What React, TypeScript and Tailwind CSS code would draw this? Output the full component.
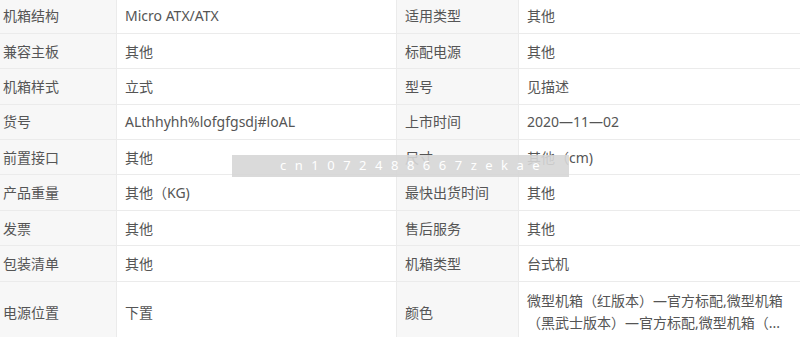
import React from "react";

const rows: [string, string, string, string][] = [
  ["机箱结构", "Micro ATX/ATX", "适用类型", "其他"],
  ["兼容主板", "其他", "标配电源", "其他"],
  ["机箱样式", "立式", "型号", "见描述"],
  ["货号", "ALthhyhh%lofgfgsdj#loAL", "上市时间", "2020—11—02"],
  ["前置接口", "其他", "尺寸", "其他（cm)"],
  ["产品重量", "其他（KG)", "最快出货时间", "其他"],
  ["发票", "其他", "售后服务", "其他"],
  ["包装清单", "其他", "机箱类型", "台式机"],
];

export default function App() {
  return (
    <div
      className="relative w-[800px] h-[337px] overflow-hidden bg-white text-[14px] text-[#555]"
      style={{ fontFamily: "'Noto Sans','Noto Sans CJK SC',sans-serif" }}
    >
      <div className="-mt-[1.5px] flex flex-col">
        {rows.map((r, i) => (
          <div
            key={i}
            className="grid grid-cols-[117px_280px_122px_1fr] h-[35.4px] border-b border-[#ebebeb]"
          >
            <div className="flex items-center pl-[3px] bg-[#f7f7f7] border-r border-[#ebebeb]">{r[0]}</div>
            <div className="flex items-center pl-[8px] border-r border-[#ebebeb]">{r[1]}</div>
            <div className="flex items-center pl-[8px] bg-[#f7f7f7] border-r border-[#ebebeb]">{r[2]}</div>
            <div className="flex items-center pl-[8px]">{r[3]}</div>
          </div>
        ))}
        <div className="grid grid-cols-[117px_280px_122px_1fr] h-[62px] border-b border-[#ebebeb]">
          <div className="flex items-center pl-[3px] bg-[#f7f7f7] border-r border-[#ebebeb]">电源位置</div>
          <div className="flex items-center pl-[8px] border-r border-[#ebebeb]">下置</div>
          <div className="flex items-center pl-[8px] bg-[#f7f7f7] border-r border-[#ebebeb]">颜色</div>
          <div className="flex items-center pl-[8px] pr-[4px] leading-[22px]">
            <div>
              微型机箱（红版本）—官方标配,微型机箱（黑武士版本）—官方标配,微型机箱（...
            </div>
          </div>
        </div>
      </div>
      <div className="absolute left-[232px] top-[155px] w-[337px] h-[22px] bg-[#d6d6d6]/90 flex items-center pl-[48px] text-white text-[13px] tracking-[8.5px]">
        cn1072488667zekae
      </div>
    </div>
  );
}
